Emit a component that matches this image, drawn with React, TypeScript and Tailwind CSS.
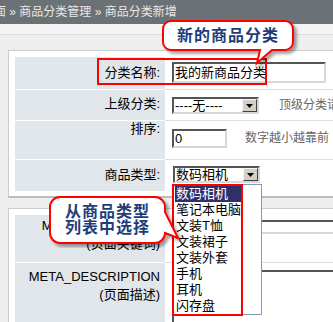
import type { ReactNode } from "react";

type RowProps = {
  label: ReactNode;
  h: string;
  lpt: string;
  vpt: string;
  line?: boolean;
  children?: ReactNode;
};

function Row({ label, h, lpt, vpt, line = true, children }: RowProps) {
  return (
    <div className={`flex ${h}`}>
      <div
        className={`w-[150px] shrink-0 bg-[#e1e6ea] pr-[5px] text-right text-[13px] leading-[16px] text-black ${lpt} ${
          line ? "border-b border-b-white" : ""
        }`}
      >
        {label}
      </div>
      <div
        className={`flex flex-1 items-start pl-[7px] ${vpt} ${
          line ? "border-b border-b-[#dedede]" : ""
        }`}
      >
        {children}
      </div>
    </div>
  );
}

function DropButton() {
  return (
    <div className="flex h-full w-[15px] items-center justify-center border border-t-[#f4f4f4] border-l-[#f4f4f4] border-r-[#404040] border-b-[#404040] bg-[#d4d0c8]">
      <svg width="7" height="4" viewBox="0 0 7 4">
        <path d="M0 0H7L3.5 4Z" fill="#000" />
      </svg>
    </div>
  );
}

function Select({ value }: { value: string }) {
  return (
    <div className="flex h-[17px] w-[87px] border-2 border-t-[#555] border-l-[#555] border-r-[#d8d8d8] border-b-[#d8d8d8] bg-white">
      <div className="flex-1 pl-[1px] text-[13px] leading-[13px] text-black">{value}</div>
      <DropButton />
    </div>
  );
}

const items = ["数码相机", "笔记本电脑", "文装T恤", "文装裙子", "文装外套", "手机", "耳机", "闪存盘"];

export default function App() {
  return (
    <div className="relative h-[322px] w-[333px] overflow-hidden bg-[#eeeeee] font-['Liberation_Sans','Noto_Sans_CJK_SC',sans-serif]">
      <div className="flex h-[24px] items-center overflow-hidden whitespace-nowrap bg-[#6b7276] text-[12px] text-[#e8e8e8]">
        <span className="-ml-[18px]">页面 » 商品分类管理 » 商品分类新增</span>
      </div>
      <div className="h-[11px] border-b border-b-[#dcdcdc] bg-[#f4f4f4]" />

      {/* panel 1 */}
      <div className="ml-[8px] mt-[15px] w-[400px] border-t border-l border-r border-b-2 border-t-[#cccccc] border-l-[#cccccc] border-r-[#cccccc] border-b-[#bcbcbc] bg-white pl-[6px] pt-[6px] pb-[5px]">
        <Row label="分类名称:" h="h-[33px]" lpt="pt-[8px]" vpt="pt-[5px]">
          <div className="h-[21px] w-[154px] border-2 border-t-[#555] border-l-[#555] border-r-[#d8d8d8] border-b-[#d8d8d8] pl-[1px] text-[13px] leading-[17px] text-black">
            我的新商品分类
          </div>
        </Row>
        <Row label="上级分类:" h="h-[31px]" lpt="pt-[6px]" vpt="pt-[7px]">
          <Select value="----无----" />
          <span className="ml-[20px] whitespace-nowrap text-[12px] leading-[17px] text-[#666]">顶级分类请选择</span>
        </Row>
        <Row label="排序:" h="h-[39px]" lpt="pt-[0px]" vpt="pt-[8px]">
          <div className="h-[19px] w-[55px] border-2 border-t-[#555] border-l-[#555] border-r-[#d8d8d8] border-b-[#d8d8d8] pl-[1px] text-[13px] leading-[15px] text-black">
            0
          </div>
          <span className="ml-[18px] whitespace-nowrap text-[12px] leading-[19px] text-[#666]">数字越小越靠前</span>
        </Row>
        <Row label="商品类型:" h="h-[31px]" lpt="pt-[7px]" vpt="pt-[6px]" line={false}>
          <div className="ml-[1px]">
            <Select value="数码相机" />
          </div>
        </Row>
      </div>

      {/* panel 2 */}
      <div className="ml-[8px] mt-[10px] h-[200px] w-[400px] border-t border-l border-r border-t-[#cccccc] border-l-[#cccccc] border-r-[#cccccc] bg-white pl-[6px] pt-[6px]">
        <div className="flex h-[48px]">
          <div className="w-[150px] shrink-0 border-b border-b-white bg-[#e1e6ea] pr-[5px] pt-[2px] text-right text-[13px] leading-[18px] text-black">
            <div>META_KEYWORDS</div>
            <div>(页面关键词)</div>
          </div>
          <div className="flex-1 border-b border-b-[#dedede] pl-[7px] pt-[5px]">
            <div className="h-[14px] w-[300px] border-2 border-t-[#555] border-l-[#555] border-r-[#d8d8d8] border-b-[#d8d8d8]" />
          </div>
        </div>
        <div className="flex h-[120px]">
          <div className="w-[150px] shrink-0 bg-[#e1e6ea] pr-[5px] pt-[5px] text-right text-[13px] leading-[18px] text-black">
            <div>META_DESCRIPTION</div>
            <div>(页面描述)</div>
          </div>
          <div className="flex-1 pl-[7px] pt-[7px]">
            <div className="h-[80px] w-[300px] border-2 border-t-[#555] border-l-[#555] border-r-[#d8d8d8] border-b-[#d8d8d8]" />
          </div>
        </div>
      </div>

      {/* open dropdown list */}
      <div className="absolute left-[173px] top-[184px] h-[131px] w-[89px] border border-[#7f9db9] bg-white pt-[1px] text-[13px] leading-[16px] text-black">
        {items.map((it, i) =>
          i === 0 ? (
            <div key={it} className="ml-[1px] h-[16px] w-[67px] bg-[#2f2f6b] pl-[1px] text-white">
              {it}
            </div>
          ) : (
            <div key={it} className="h-[16px] pl-[2px]">
              {it}
            </div>
          )
        )}
      </div>

      {/* red highlight boxes */}
      <div className="absolute left-[97px] top-[58px] h-[27px] w-[170px] border-2 border-[#ff0000]" />
      <div className="absolute left-[172px] top-[184px] h-[132px] w-[71px] border-2 border-[#ff0000]" />

      {/* callout 1 */}
      <div className="absolute left-[158px] top-[16px] h-[55px] w-[145px]">
        <svg width="145" height="55" className="absolute left-0 top-0">
          <defs>
            <filter id="sh1" x="-20%" y="-20%" width="140%" height="160%">
              <feDropShadow dx="3" dy="3" stdDeviation="1.5" floodColor="#000" floodOpacity="0.35" />
            </filter>
          </defs>
          <path
            d="M13 5H127A8 8 0 0 1 135 13V26A8 8 0 0 1 127 34H114L99 47L102 34H13A8 8 0 0 1 5 26V13A8 8 0 0 1 13 5Z"
            fill="#fff"
            stroke="#ff0000"
            strokeWidth="2"
            filter="url(#sh1)"
          />
        </svg>
        <div className="absolute left-[5px] top-[5px] flex h-[29px] w-[130px] items-center justify-center text-[16px] font-bold tracking-[1px] text-[#1f3d7a]">
          新的商品分类
        </div>
      </div>

      {/* callout 2 */}
      <div className="absolute left-[45px] top-[192px] h-[56px] w-[140px]">
        <svg width="140" height="56" className="absolute left-0 top-0">
          <defs>
            <filter id="sh2" x="-20%" y="-20%" width="140%" height="160%">
              <feDropShadow dx="3" dy="3" stdDeviation="1.5" floodColor="#000" floodOpacity="0.35" />
            </filter>
          </defs>
          <path
            d="M15 5H110A10 10 0 0 1 120 15V20L133 46L120 41A10 10 0 0 1 110 51H15A10 10 0 0 1 5 41V15A10 10 0 0 1 15 5Z"
            fill="#fff"
            stroke="#ff0000"
            strokeWidth="2"
            filter="url(#sh2)"
          />
        </svg>
        <div className="absolute left-[5px] top-[5px] flex h-[46px] w-[115px] flex-col items-center justify-center text-[16px] font-bold leading-[16px] tracking-[1px] text-[#1f3d7a]">
          <div>从商品类型</div>
          <div>列表中选择</div>
        </div>
      </div>
    </div>
  );
}
